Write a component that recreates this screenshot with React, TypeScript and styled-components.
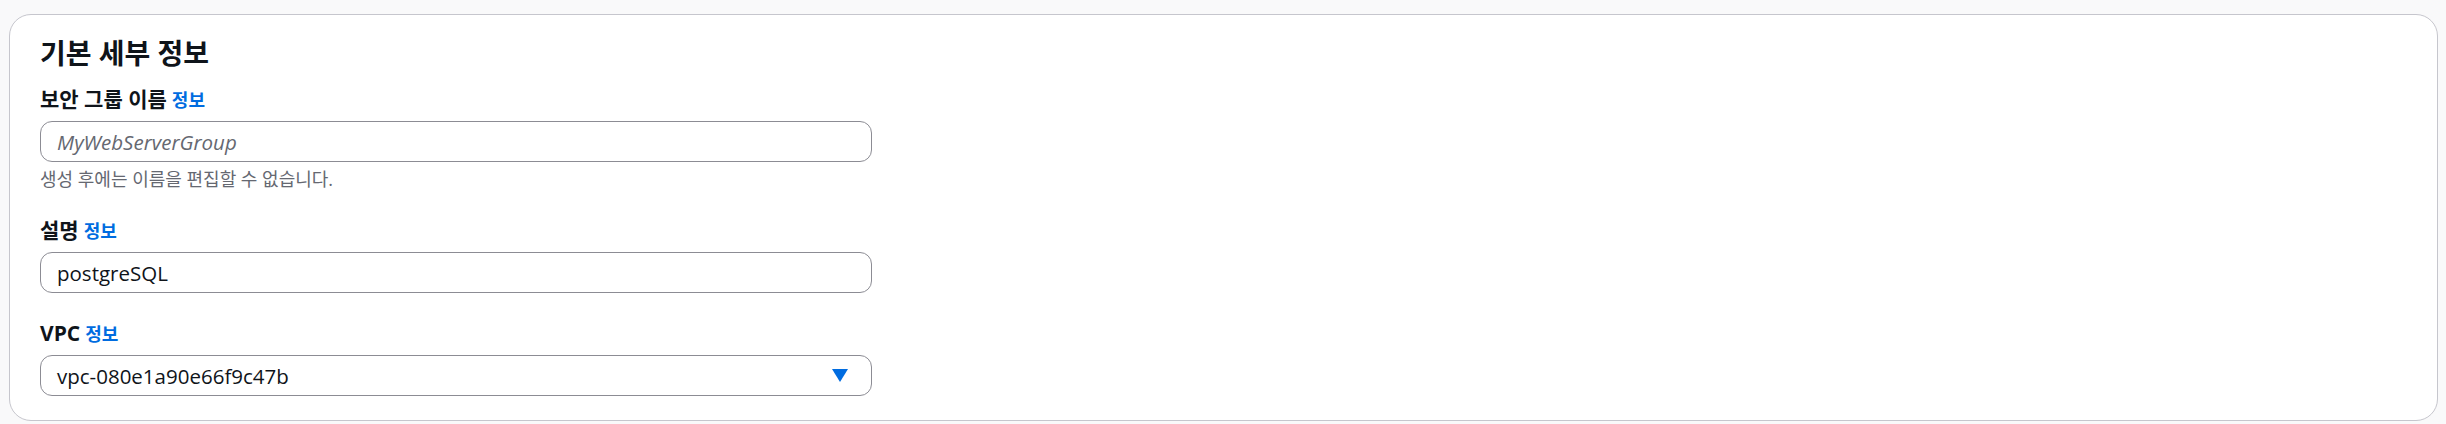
import React from "react";
import styled, { createGlobalStyle } from "styled-components";

const GlobalStyle = createGlobalStyle`
  html, body {
    margin: 0;
    padding: 0;
    background-color: #f9f9fa;
  }
  body {
    font-family: "Open Sans", "Noto Sans CJK KR", sans-serif;
    color: #0f141a;
  }
`;

const Page = styled.div`
  padding: 14px 8px 3px 9px;
`;

const Card = styled.section`
  background-color: #ffffff;
  border: 1px solid #c6c6cd;
  border-radius: 22px;
  padding: 21px 30px 24px 30px;
  display: flex;
  flex-direction: column;
`;

const Heading = styled.h2`
  margin: 0 0 15px 0;
  font-size: 28px;
  line-height: 34px;
  font-weight: 700;
`;

const Fields = styled.div`
  display: flex;
  flex-direction: column;
  gap: 26px;
`;

const Field = styled.div`
  display: flex;
  flex-direction: column;
  width: 832px;
`;

const Label = styled.label`
  font-size: 21px;
  line-height: 28px;
  font-weight: 700;
  margin-bottom: 8px;
`;

const InfoLink = styled.a`
  color: #006ce0;
  font-size: 18px;
  line-height: 1;
  font-weight: 700;
  text-decoration: none;
  margin-left: 5px;
  cursor: pointer;
`;

const TextInput = styled.input`
  box-sizing: border-box;
  height: 41px;
  width: 100%;
  padding: 0 16px;
  border: 1px solid #8c8c94;
  border-radius: 12px;
  background: #ffffff;
  font-family: inherit;
  font-size: 20.5px;
  color: #0f141a;
  outline: none;

  &::placeholder {
    color: #656871;
    font-style: italic;
  }
`;

const SelectBox = styled.button`
  box-sizing: border-box;
  height: 41px;
  width: 100%;
  padding: 0 23px 0 16px;
  border: 1px solid #8c8c94;
  border-radius: 12px;
  background: #ffffff;
  font-family: inherit;
  font-size: 20.5px;
  color: #0f141a;
  display: flex;
  align-items: center;
  justify-content: space-between;
  cursor: pointer;
  text-align: left;
`;

const Caret = styled.svg`
  width: 16px;
  height: 13px;
  flex: none;
`;

const Helper = styled.div`
  margin-top: 6px;
  font-size: 18px;
  line-height: 22px;
  color: #656871;
`;

const Info = () => <InfoLink>정보</InfoLink>;

export default function App() {
  return (
    <>
      <GlobalStyle />
      <Page>
        <Card>
          <Heading>기본 세부 정보</Heading>
          <Fields>
            <Field>
              <Label>
                보안 그룹 이름
                <Info />
              </Label>
              <TextInput placeholder="MyWebServerGroup" />
              <Helper>생성 후에는 이름을 편집할 수 없습니다.</Helper>
            </Field>
            <Field>
              <Label>
                설명
                <Info />
              </Label>
              <TextInput defaultValue="postgreSQL" />
            </Field>
            <Field>
              <Label>
                VPC
                <Info />
              </Label>
              <SelectBox type="button">
                <span>vpc-080e1a90e66f9c47b</span>
                <Caret viewBox="0 0 16 13">
                  <polygon points="0,0 16,0 8,13" fill="#006ce0" />
                </Caret>
              </SelectBox>
            </Field>
          </Fields>
        </Card>
      </Page>
    </>
  );
}
